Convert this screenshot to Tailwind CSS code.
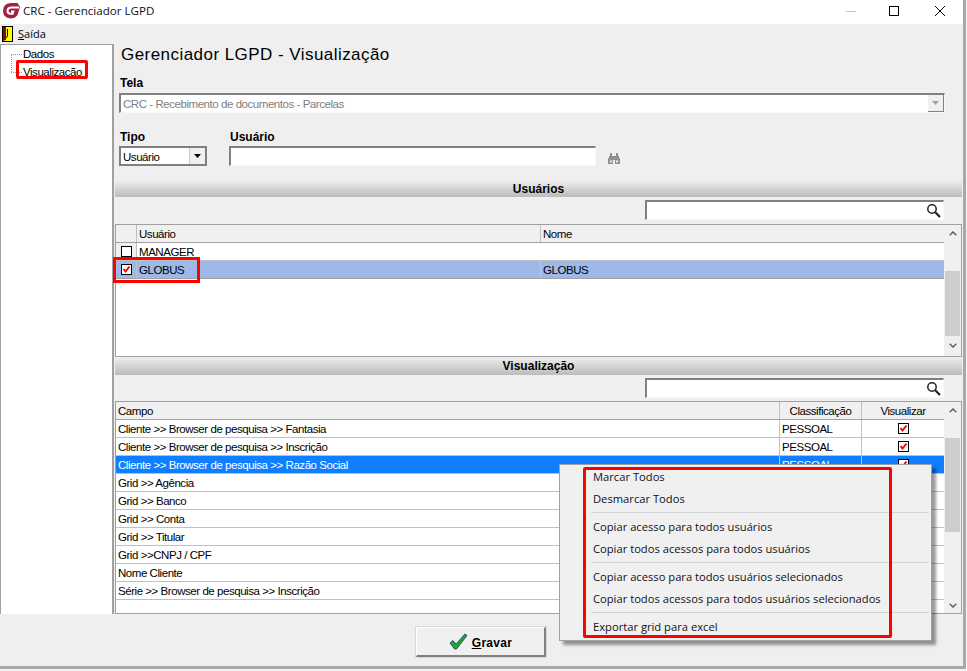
<!DOCTYPE html>
<html>
<head>
<meta charset="utf-8">
<script src="https://cdn.jsdelivr.net/npm/@tailwindcss/browser@4"></script>
</head>
<body class="m-0 bg-[#f4f4f4]">
<div class="relative w-[967px] h-[671px] overflow-hidden font-['Liberation_Sans',sans-serif] text-[11.5px] tracking-[-0.45px] text-black">
  <div class="flex flex-col w-[966px] h-[669px] bg-[#efefef] border-r-[3px] border-b-[3px] border-[#a8a8a8]">
    <!-- title bar -->
    <div class="flex items-center h-[24px] bg-white shrink-0">
      <svg class="ml-[2px] mb-[3px] w-[18px] h-[17px]" viewBox="0 0 18 17"><path d="M8.5 1H15.5L18 5L15.5 13Q13 16.5 8.5 16.5Q1 16 1 8.5Q1.2 1.5 8.5 1Z" fill="#a3203f"/><path d="M17 5.4H8.8Q5.6 5.8 5.5 8.8Q5.6 11.8 8.4 11.8H10.6L11.4 9.4H9" fill="none" stroke="#fff" stroke-width="2"/></svg>
      <span class="ml-[3px] mb-[3px] font-['Open_Sans',sans-serif] text-[11.6px] tracking-normal text-[#111]">CRC - Gerenciador LGPD</span>
      <div class="ml-auto flex items-center h-full pr-[2px]">
        <svg class="w-[46px] h-[24px]" viewBox="0 0 46 24"><path d="M23 11.5H33" stroke="#c4c4c4"/></svg>
        <svg class="w-[46px] h-[24px]" viewBox="0 0 46 24"><rect x="20.5" y="6.5" width="9" height="9" fill="none" stroke="#000"/></svg>
        <svg class="w-[46px] h-[24px]" viewBox="0 0 46 24"><path d="M20 6L30 16M30 6L20 16" stroke="#000" fill="none"/></svg>
      </div>
    </div>
    <!-- menu bar -->
    <div class="flex items-center h-[20px] shrink-0 pl-[2px]">
      <svg class="w-[11px] h-[16px]" viewBox="0 0 11 16"><rect x="0.5" y="0.5" width="10" height="15" fill="#ffff00" stroke="#000"/><path d="M1 1H4V14L1 15Z" fill="#7a1010"/><path d="M5.5 3V10L4 12" stroke="#000" fill="none"/></svg>
      <span class="ml-[5px] font-['Open_Sans',sans-serif] text-[11px] tracking-normal"><span class="underline">S</span>aída</span>
    </div>
    <!-- content -->
    <div class="flex h-[570px] shrink-0">
      <!-- tree -->
      <div class="relative w-[114px] shrink-0 bg-white border-t border-l border-r-2 border-[#a0a0a0] pt-[3px] pl-[22px]">
        <div class="absolute left-[10px] top-[9px] h-[18px] border-l border-dotted border-[#999]"></div>
        <div class="absolute left-[10px] top-[9px] w-[11px] border-t border-dotted border-[#999]"></div>
        <div class="absolute left-[10px] top-[27px] w-[11px] border-t border-dotted border-[#999]"></div>
        <div class="h-[13px] leading-[13px]">Dados</div>
        <div class="h-[16px] mt-[3px] leading-[16px]">Visualização</div>
      </div>
      <!-- main -->
      <div class="flex flex-col flex-1 min-w-0 pl-[1px] pr-[1px]">
        <div class="pl-[5px] h-[136px] shrink-0">
          <div class="pt-[1px] pl-[1px] h-[29px] text-[17px] leading-[20px] tracking-[0.45px]">Gerenciador LGPD - Visualização</div>
          <div class="mt-[3px] h-[14px] font-bold text-[12px] tracking-normal leading-[14px]">Tela</div>
          <!-- combo Tela -->
          <div class="mt-[3px] -ml-[1px] flex items-center w-[826px] h-[20px] bg-white border-t-2 border-l-2 border-[#808080] border-r border-b border-r-[#f8f8f8] border-b-[#f8f8f8] text-[#808080] pl-[2px]">
            <span class="flex-1 leading-[18px] pt-[1px]">CRC - Recebimento de documentos - Parcelas</span>
            <span class="flex items-center justify-center w-[16px] h-[17px] bg-[#f0f0f0] border-r border-b border-[#808080]">
              <svg class="w-[7px] h-[4px]" viewBox="0 0 7 4"><path d="M0 0H7L3.5 4Z" fill="#a0a0a0"/></svg>
            </span>
          </div>
          <div class="mt-[17px] flex">
            <div class="w-[110px]">
              <div class="font-bold text-[12px] tracking-normal h-[16px] leading-[14px]">Tipo</div>
              <div class="-ml-[1px] flex items-center w-[88px] h-[20px] bg-white border-t-2 border-l-2 border-[#808080] border-r-2 border-b-2 border-r-[#808080] border-b-[#808080] pl-[2px]">
                <span class="flex-1 leading-[18px] pt-[1px]">Usuário</span>
                <span class="flex items-center justify-center w-[16px] h-[16px] bg-[#f0f0f0] border-l border-[#c8c8c8]">
                  <svg class="w-[7px] h-[4px]" viewBox="0 0 7 4"><path d="M0 0H7L3.5 4Z" fill="#000"/></svg>
                </span>
              </div>
            </div>
            <div>
              <div class="font-bold text-[12px] tracking-normal h-[16px] leading-[14px]">Usuário</div>
              <div class="-ml-[1px] flex items-center">
                <div class="w-[367px] h-[20px] bg-white border-t-2 border-l-2 border-[#808080] border-r border-b border-r-[#f8f8f8] border-b-[#f8f8f8]"></div>
                <svg class="ml-[12px] mt-[5px] w-[12px] h-[11px]" viewBox="0 0 12 11"><path d="M2 0H4V3H8V0H10V3H11V5H12V11H7V7H5V11H0V5H1V3H2Z" fill="#8f8f8f"/><path d="M2 7.5H4V9.5H2ZM8 7.5H10V9.5H8Z" fill="#efefef"/></svg>
              </div>
            </div>
          </div>
        </div>
        <!-- band Usuários -->
        <div class="flex items-center justify-center h-[17px] shrink-0 font-bold text-[12px] tracking-normal bg-gradient-to-b from-[#efefef] to-[#bcbcbc]">Usuários</div>
        <!-- search 1 -->
        <div class="flex justify-end h-[27px] shrink-0 pt-[3px] pr-[18px]">
          <div class="flex items-center justify-end w-[299px] h-[20px] bg-white border-t-2 border-l-2 border-[#808080] border-r border-b border-r-[#f8f8f8] border-b-[#f8f8f8] pr-[2px]">
            <svg class="w-[15px] h-[15px]" viewBox="0 0 15 15"><circle cx="6" cy="6" r="4.2" fill="none" stroke="#222" stroke-width="1.5"/><path d="M9.2 9.2L14 14" stroke="#222" stroke-width="2.2"/></svg>
          </div>
        </div>
        <!-- grid 1 -->
        <div class="flex h-[133px] shrink-0 border border-[#a0a0a0] bg-white">
          <div class="flex-1 min-w-0">
            <div class="flex h-[18px] bg-[#f0f0f0] border-b border-[#a0a0a0] leading-[19px]">
              <div class="w-[21px] border-r border-[#c0c0c0]"></div>
              <div class="w-[404px] pl-[2px] border-r border-[#c0c0c0]">Usuário</div>
              <div class="flex-1 pl-[2px]">Nome</div>
            </div>
            <div class="flex h-[18px] border-b border-[#c0c0c0] leading-[19px]">
              <div class="flex items-center justify-center w-[21px] bg-[#f0f0f0] border-r border-[#c0c0c0]"><span class="block w-[11px] h-[11px] bg-white border border-black"></span></div>
              <div class="w-[404px] pl-[2px]">MANAGER</div>
            </div>
            <div class="flex h-[18px] bg-[#9cb9e9] border-b border-[#a0a0a0] leading-[19px]">
              <div class="flex items-center justify-center w-[21px] border-r border-[#c0c0c0]">
                <svg class="w-[11px] h-[11px]" viewBox="0 0 11 11"><rect x="0.5" y="0.5" width="10" height="10" fill="#fff" stroke="#000"/><path d="M2.5 5L4.5 7.5L8.5 2.5" fill="none" stroke="#f00" stroke-width="2"/></svg>
              </div>
              <div class="w-[404px] pl-[2px] border-r border-[#b4c8e8]">GLOBUS</div>
              <div class="flex-1 pl-[2px]">GLOBUS</div>
            </div>
          </div>
          <div class="flex flex-col items-center w-[17px] shrink-0 bg-[#f0f0f0]">
            <svg class="mt-[6px] w-[8px] h-[5px]" viewBox="0 0 8 5"><path d="M.7 4.3L4 1L7.3 4.3" fill="none" stroke="#606060" stroke-width="1.5"/></svg>
            <div class="mt-[35px] w-[15px] h-[65px] bg-[#cdcdcd]"></div>
            <svg class="mt-[7px] w-[8px] h-[5px]" viewBox="0 0 8 5"><path d="M.7 .7L4 4L7.3 .7" fill="none" stroke="#606060" stroke-width="1.5"/></svg>
          </div>
        </div>
        <!-- band Visualização -->
        <div class="flex items-center justify-center h-[18px] shrink-0 font-bold text-[12px] tracking-normal bg-gradient-to-b from-[#efefef] to-[#bcbcbc]">Visualização</div>
        <!-- search 2 -->
        <div class="flex justify-end h-[26px] shrink-0 pt-[3px] pr-[18px]">
          <div class="flex items-center justify-end w-[299px] h-[20px] bg-white border-t-2 border-l-2 border-[#808080] border-r border-b border-r-[#f8f8f8] border-b-[#f8f8f8] pr-[2px]">
            <svg class="w-[15px] h-[15px]" viewBox="0 0 15 15"><circle cx="6" cy="6" r="4.2" fill="none" stroke="#222" stroke-width="1.5"/><path d="M9.2 9.2L14 14" stroke="#222" stroke-width="2.2"/></svg>
          </div>
        </div>
        <!-- grid 2 -->
        <div class="flex h-[213px] shrink-0 border border-[#a0a0a0] bg-white">
          <div class="flex-1 min-w-0">
            <div class="flex h-[18px] bg-[#f0f0f0] border-b border-[#a0a0a0] leading-[19px]">
              <div class="flex-1 pl-[2px] border-r border-[#c0c0c0]">Campo</div>
              <div class="w-[82px] text-center border-r border-[#c0c0c0]">Classificação</div>
              <div class="w-[82px] text-center">Visualizar</div>
            </div>
            <div class="flex h-[18px] border-b border-[#c0c0c0] leading-[19px]">
              <div class="flex-1 pl-[2px] border-r border-[#c0c0c0]">Cliente &gt;&gt; Browser de pesquisa &gt;&gt; Fantasia</div>
              <div class="w-[82px] pl-[2px] border-r border-[#c0c0c0]">PESSOAL</div>
              <div class="flex items-center justify-center w-[82px]"><svg class="w-[11px] h-[11px]" viewBox="0 0 11 11"><rect x="0.5" y="0.5" width="10" height="10" fill="#fff" stroke="#000"/><path d="M2.5 5L4.5 7.5L8.5 2.5" fill="none" stroke="#f00" stroke-width="2"/></svg></div>
            </div>
            <div class="flex h-[18px] border-b border-[#c0c0c0] leading-[19px]">
              <div class="flex-1 pl-[2px] border-r border-[#c0c0c0]">Cliente &gt;&gt; Browser de pesquisa &gt;&gt; Inscrição</div>
              <div class="w-[82px] pl-[2px] border-r border-[#c0c0c0]">PESSOAL</div>
              <div class="flex items-center justify-center w-[82px]"><svg class="w-[11px] h-[11px]" viewBox="0 0 11 11"><rect x="0.5" y="0.5" width="10" height="10" fill="#fff" stroke="#000"/><path d="M2.5 5L4.5 7.5L8.5 2.5" fill="none" stroke="#f00" stroke-width="2"/></svg></div>
            </div>
            <div class="flex h-[18px] bg-[#0f7fff] text-white border-b border-[#c0c0c0] leading-[19px]">
              <div class="flex-1 pl-[2px] border-r border-[#c0c0c0]">Cliente &gt;&gt; Browser de pesquisa &gt;&gt; Razão Social</div>
              <div class="w-[82px] pl-[2px] border-r border-[#c0c0c0]">PESSOAL</div>
              <div class="flex items-center justify-center w-[82px]"><svg class="w-[11px] h-[11px]" viewBox="0 0 11 11"><rect x="0.5" y="0.5" width="10" height="10" fill="#fff" stroke="#000"/><path d="M2.5 5L4.5 7.5L8.5 2.5" fill="none" stroke="#f00" stroke-width="2"/></svg></div>
            </div>
            <div class="h-[18px] pl-[2px] border-b border-[#c0c0c0] leading-[19px]">Grid &gt;&gt; Agência</div>
            <div class="h-[18px] pl-[2px] border-b border-[#c0c0c0] leading-[19px]">Grid &gt;&gt; Banco</div>
            <div class="h-[18px] pl-[2px] border-b border-[#c0c0c0] leading-[19px]">Grid &gt;&gt; Conta</div>
            <div class="h-[18px] pl-[2px] border-b border-[#c0c0c0] leading-[19px]">Grid &gt;&gt; Titular</div>
            <div class="h-[18px] pl-[2px] border-b border-[#c0c0c0] leading-[19px]">Grid &gt;&gt;CNPJ / CPF</div>
            <div class="h-[18px] pl-[2px] border-b border-[#c0c0c0] leading-[19px]">Nome Cliente</div>
            <div class="h-[18px] pl-[2px] border-b border-[#c0c0c0] leading-[19px]">Série &gt;&gt; Browser de pesquisa &gt;&gt; Inscrição</div>
          </div>
          <div class="flex flex-col items-center w-[17px] shrink-0 bg-[#f0f0f0]">
            <svg class="mt-[6px] w-[8px] h-[5px]" viewBox="0 0 8 5"><path d="M.7 4.3L4 1L7.3 4.3" fill="none" stroke="#606060" stroke-width="1.5"/></svg>
            <div class="mt-[25px] w-[15px] h-[94px] bg-[#cdcdcd]"></div>
            <svg class="mt-[71px] w-[8px] h-[5px]" viewBox="0 0 8 5"><path d="M.7 .7L4 4L7.3 .7" fill="none" stroke="#606060" stroke-width="1.5"/></svg>
          </div>
        </div>
      </div>
    </div>
    <!-- footer -->
    <div class="flex-1 flex justify-start pt-[13px] pl-[416px]">
      <button class="flex items-center justify-center w-[130px] h-[30px] bg-[#f0f0f0] border-t border-l border-t-white border-l-white border-r-2 border-b-2 border-r-[#808080] border-b-[#808080] font-bold text-[12px] tracking-normal outline outline-1 outline-[#d8d8d8]">
        <svg class="w-[19px] h-[18px] mr-[4px]" viewBox="0 0 19 18"><path d="M1 10L4 7.5L7 11L16 1L18 2.5L7.5 16H5.5Z" fill="#1fa82a" stroke="#0b3d66" stroke-width="0.8"/></svg>
        <span class="tracking-[0.3px] pt-[2px]"><span class="underline">G</span>ravar</span>
      </button>
    </div>
  </div>

  <!-- context menu -->
  <div class="absolute left-[559px] top-[464px] w-[373px] h-[177px] bg-[#f0f0f0] border border-[#a0a0a0] shadow-[4px_4px_3px_rgba(0,0,0,0.4)] font-['Open_Sans',sans-serif] text-[11.2px] tracking-normal leading-[22px] text-[#101020] pt-[1px]">
    <div class="h-[22px] pl-[33px]">Marcar Todos</div>
    <div class="h-[22px] pl-[33px]">Desmarcar Todos</div>
    <div class="ml-[31px] mr-[2px] my-[2px] border-t border-[#d4d4d4] h-[2px]"></div>
    <div class="h-[22px] pl-[33px]">Copiar acesso para todos usuários</div>
    <div class="h-[22px] pl-[33px]">Copiar todos acessos para todos usuários</div>
    <div class="ml-[31px] mr-[2px] my-[2px] border-t border-[#d4d4d4] h-[2px]"></div>
    <div class="h-[22px] pl-[33px]">Copiar acesso para todos usuários selecionados</div>
    <div class="h-[22px] pl-[33px]">Copiar todos acessos para todos usuários selecionados</div>
    <div class="ml-[31px] mr-[2px] my-[2px] border-t border-[#d4d4d4] h-[2px]"></div>
    <div class="h-[22px] pl-[33px]">Exportar grid para excel</div>
  </div>

  <!-- red annotations -->
  <div class="absolute left-[16px] top-[60px] w-[72px] h-[19px] border-[3px] border-[#f00] rounded-[2px]"></div>
  <div class="absolute left-[113px] top-[257px] w-[87px] h-[26px] border-[3px] border-[#f00]"></div>
  <div class="absolute left-[583px] top-[467px] w-[309px] h-[171px] border-[3px] border-[#f00] rounded-[2px]"></div>
</div>
</body>
</html>
